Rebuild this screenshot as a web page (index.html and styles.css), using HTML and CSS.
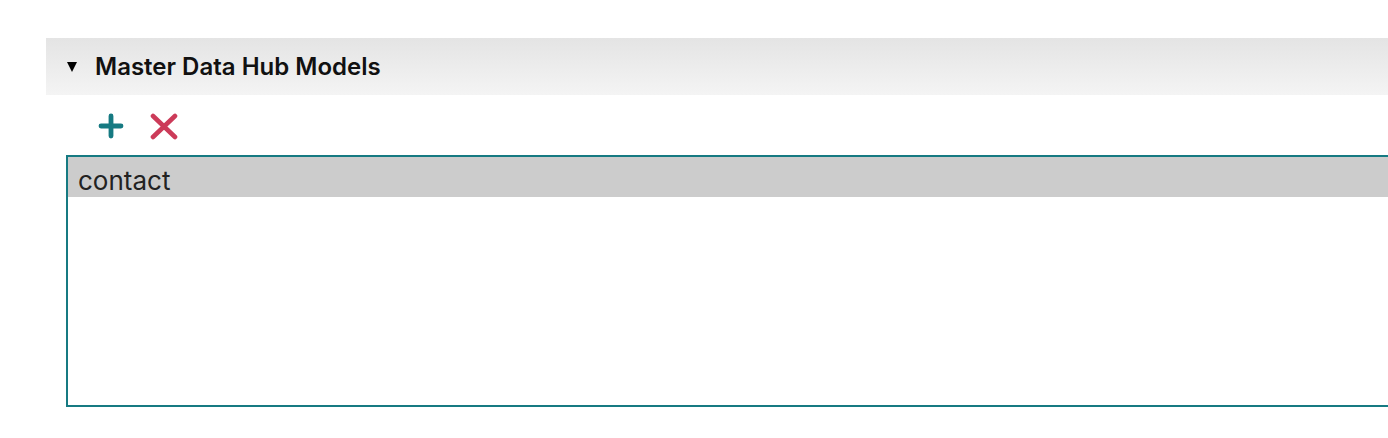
FILE: index.html
```html
<!DOCTYPE html>
<html>
<head>
<meta charset="utf-8">
<link rel="stylesheet" href="styles.css">
</head>
<body>
<div class="section">
  <div class="section-header">
    <span class="caret"></span>
    <span class="title">Master Data Hub Models</span>
  </div>
  <div class="toolbar">
    <button class="icon-btn add" aria-label="Add">
      <svg width="26" height="26" viewBox="0 0 26 26"><path d="M13 3v20M3 13h20" stroke="#167a82" stroke-width="4.8" stroke-linecap="round" fill="none"/></svg>
    </button>
    <button class="icon-btn remove" aria-label="Remove">
      <svg width="30" height="27" viewBox="0 0 30 27"><path d="M4 3l22 21M26 3l-22 21" stroke="#cc3b59" stroke-width="4.6" stroke-linecap="round" fill="none"/></svg>
    </button>
  </div>
  <div class="list">
    <div class="list-item selected">contact</div>
  </div>
</div>
</body>
</html>
```
FILE: styles.css
```css
html, body {
  margin: 0;
  padding: 0;
  background: #ffffff;
}
body {
  font-family: Inter, "Noto Sans", sans-serif;
  overflow: hidden;
}
.section {
  margin: 38px 0 0 46px;
  width: 1400px;
}
.section-header {
  height: 57px;
  background: linear-gradient(#e4e4e4, #f4f4f4);
  display: flex;
  align-items: center;
  padding-left: 21px;
}
.caret {
  width: 0;
  height: 0;
  border-left: 5.5px solid transparent;
  border-right: 5.5px solid transparent;
  border-top: 10px solid #000;
  margin-right: 18px;
  margin-top: 1px;
}
.title {
  font-size: 24px;
  font-weight: 600;
  color: #111;
}
.toolbar {
  height: 60px;
  display: flex;
  align-items: flex-start;
  padding-left: 52px;
  padding-top: 18px;
  box-sizing: border-box;
  gap: 25px;
}
.icon-btn {
  border: 0;
  background: none;
  padding: 0;
  margin: 0;
  display: block;
  cursor: pointer;
}
.icon-btn svg { display: block; }
.list {
  margin-left: 20px;
  height: 252px;
  box-sizing: border-box;
  border: 2px solid #167a82;
}
.list-item {
  height: 40px;
  line-height: 47px;
  padding-left: 10px;
  font-size: 26px;
  color: #222;
  overflow: hidden;
}
.list-item.selected {
  background: #cccccc;
}
```
